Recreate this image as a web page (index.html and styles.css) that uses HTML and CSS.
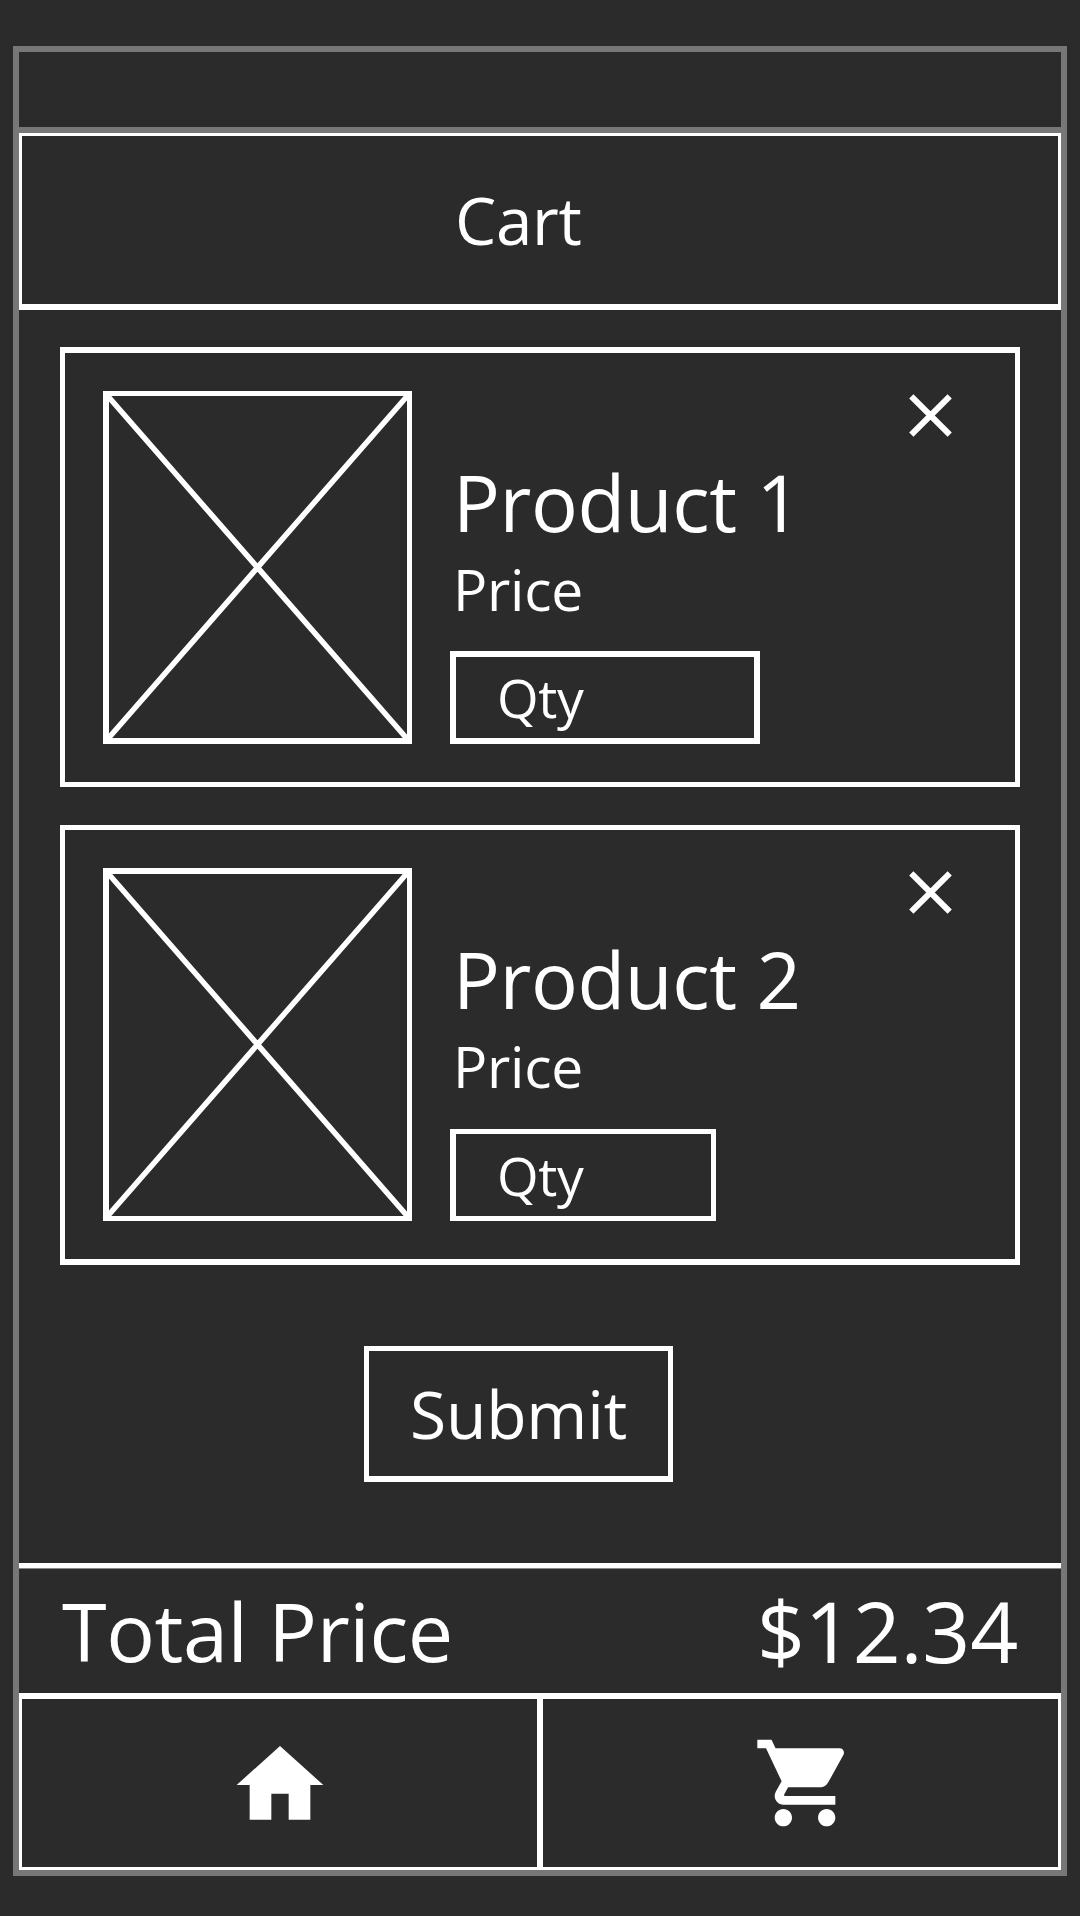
FILE: index.html
```html
<!DOCTYPE html>
<html lang="en">
<head>
<meta charset="utf-8">
<title>Cart</title>
<link rel="stylesheet" href="styles.css">
</head>
<body>
<div class="phone">
  <div class="status"></div>
  <header class="header"><h1 class="title">Cart</h1></header>
  <main class="content">
    <section class="card">
      <svg class="picture" viewBox="0 0 309 353"><path d="M0 0H309V353H0ZM6 5V347H304V5Z" fill-rule="evenodd" fill="#fff"/><path d="M3 3L306 350M306 3L3 350" stroke="#fff" stroke-width="5.5"/></svg>
      <div class="details">
        <h2 class="name">Product 1</h2>
        <p class="price">Price</p>
        <div class="qty">Qty</div>
      </div>
      <svg class="remove" viewBox="0 0 44 44"><path d="M2.300 2.300L40.700 40.700M40.700 2.300L2.300 40.700"/></svg>
    </section>
    <section class="card card-second">
      <svg class="picture" viewBox="0 0 309 353"><path d="M0 0H309V353H0ZM6 6V348H304V6Z" fill-rule="evenodd" fill="#fff"/><path d="M3 3L306 350M306 3L3 350" stroke="#fff" stroke-width="5.5"/></svg>
      <div class="details">
        <h2 class="name">Product 2</h2>
        <p class="price">Price</p>
        <div class="qty qty-narrow">Qty</div>
      </div>
      <svg class="remove" viewBox="0 0 44 44"><path d="M2.300 2.300L40.700 40.700M40.700 2.300L2.300 40.700"/></svg>
    </section>
    <button class="submit">Submit</button>
  </main>
  <div class="total"><span class="total-label">Total Price</span><span class="total-value">$12.34</span></div>
  <nav class="nav">
    <a class="tab tab-home"><svg class="icon" viewBox="0 0 24 24"><path d="M10 20v-6h4v6h5v-8h3L12 3 2 12h3v8z"/></svg></a>
    <a class="tab tab-cart"><svg class="icon" viewBox="0 0 24 24"><path d="M7 18c-1.1 0-1.99.9-1.99 2S5.900 22 7 22s2-.9 2-2-.9-2-2-2zM1 2v2h2l3.600 7.590-1.350 2.450c-.16.28-.25.61-.25.96 0 1.100.9 2 2 2h12v-2H7.420c-.14 0-.25-.11-.25-.25l.03-.12.9-1.630h7.450c.75 0 1.410-.41 1.750-1.030l3.580-6.490c.08-.14.12-.31.12-.48 0-.55-.45-1-1-1H5.210l-.94-2H1zm16 16c-1.100 0-1.990.9-1.990 2s.89 2 1.990 2 2-.9 2-2-.9-2-2-2z"/></svg></a>
  </nav>
</div>
</body>
</html>
```
FILE: styles.css
```css
* { box-sizing: border-box; }
body { margin: 0; padding: 46px 13px 40px; height: 1916px; background: #2b2b2b; color: #fff; font-family: "Open Sans", "Noto Sans", sans-serif; }
h1, h2, p { margin: 0; font-weight: 400; }
.phone { height: 1830px; border: 6px solid #777; display: flex; flex-direction: column; }
.status { height: 81px; border-bottom: 6px solid #777; }
.header { height: 177px; border: 3px solid #fff; border-bottom-width: 6px; padding: 39px 0 0 433px; }
.title { font-size: 65.500px; line-height: 90px; letter-spacing: -.3px; }
.content { height: 1253px; padding: 37px 41px 0; display: flex; flex-direction: column; }
.card { height: 440px; border: 5px solid #fff; border-top-width: 6px; padding: 38px 62px 0 38px; display: flex; align-items: flex-start; }
.card-second { margin-top: 38px; border-width: 5px 5px 6px; }
.picture { width: 309px; height: 353px; flex: none; }
.details { margin-left: 38px; padding-top: 61px; flex: 1; }
.name { font-size: 78px; line-height: 100px; padding-left: 3px; letter-spacing: -.4px; white-space: nowrap; }
.price { font-size: 57px; line-height: 74px; padding-left: 3px; letter-spacing: -.25px; }
.qty { width: 310px; height: 93px; margin-top: 25px; border: 6px solid #fff; padding-left: 41px; font-size: 53.500px; line-height: 81px; letter-spacing: -.4px; }
.qty-narrow { width: 266px; height: 92px; margin-top: 26px; border-width: 5px 5px 5px 6px; line-height: 83px; }
.remove { width: 44px; height: 44px; margin-top: 3px; flex: none; fill: none; stroke: #fff; stroke-width: 6; }
.submit { width: 309px; height: 136px; margin: 81px 0 0 304px; padding: 0; border: 5px solid #fff; border-bottom-width: 6px; background: none; color: inherit; font: 66px/125px "Open Sans", "Noto Sans", sans-serif; letter-spacing: -.2px; }
.total { height: 130px; border-top: 5px solid #fff; box-shadow: inset 0 1px #888; padding: 1px 43px 0; display: flex; justify-content: space-between; font-size: 81px; line-height: 124px; letter-spacing: -.4px; }
.total-value { font-size: 84px; letter-spacing: -.2px; }
.nav { height: 177px; border: 3px solid #fff; border-top-width: 6px; display: flex; }
.tab { flex: 1; display: flex; align-items: center; justify-content: center; }
.tab + .tab { border-left: 6px solid #fff; }
.tab-home { padding-top: 4px; }
.tab-cart { padding-left: 9px; flex: none; width: 521px; }
.icon { width: 104px; height: 104px; fill: #fff; }
```
